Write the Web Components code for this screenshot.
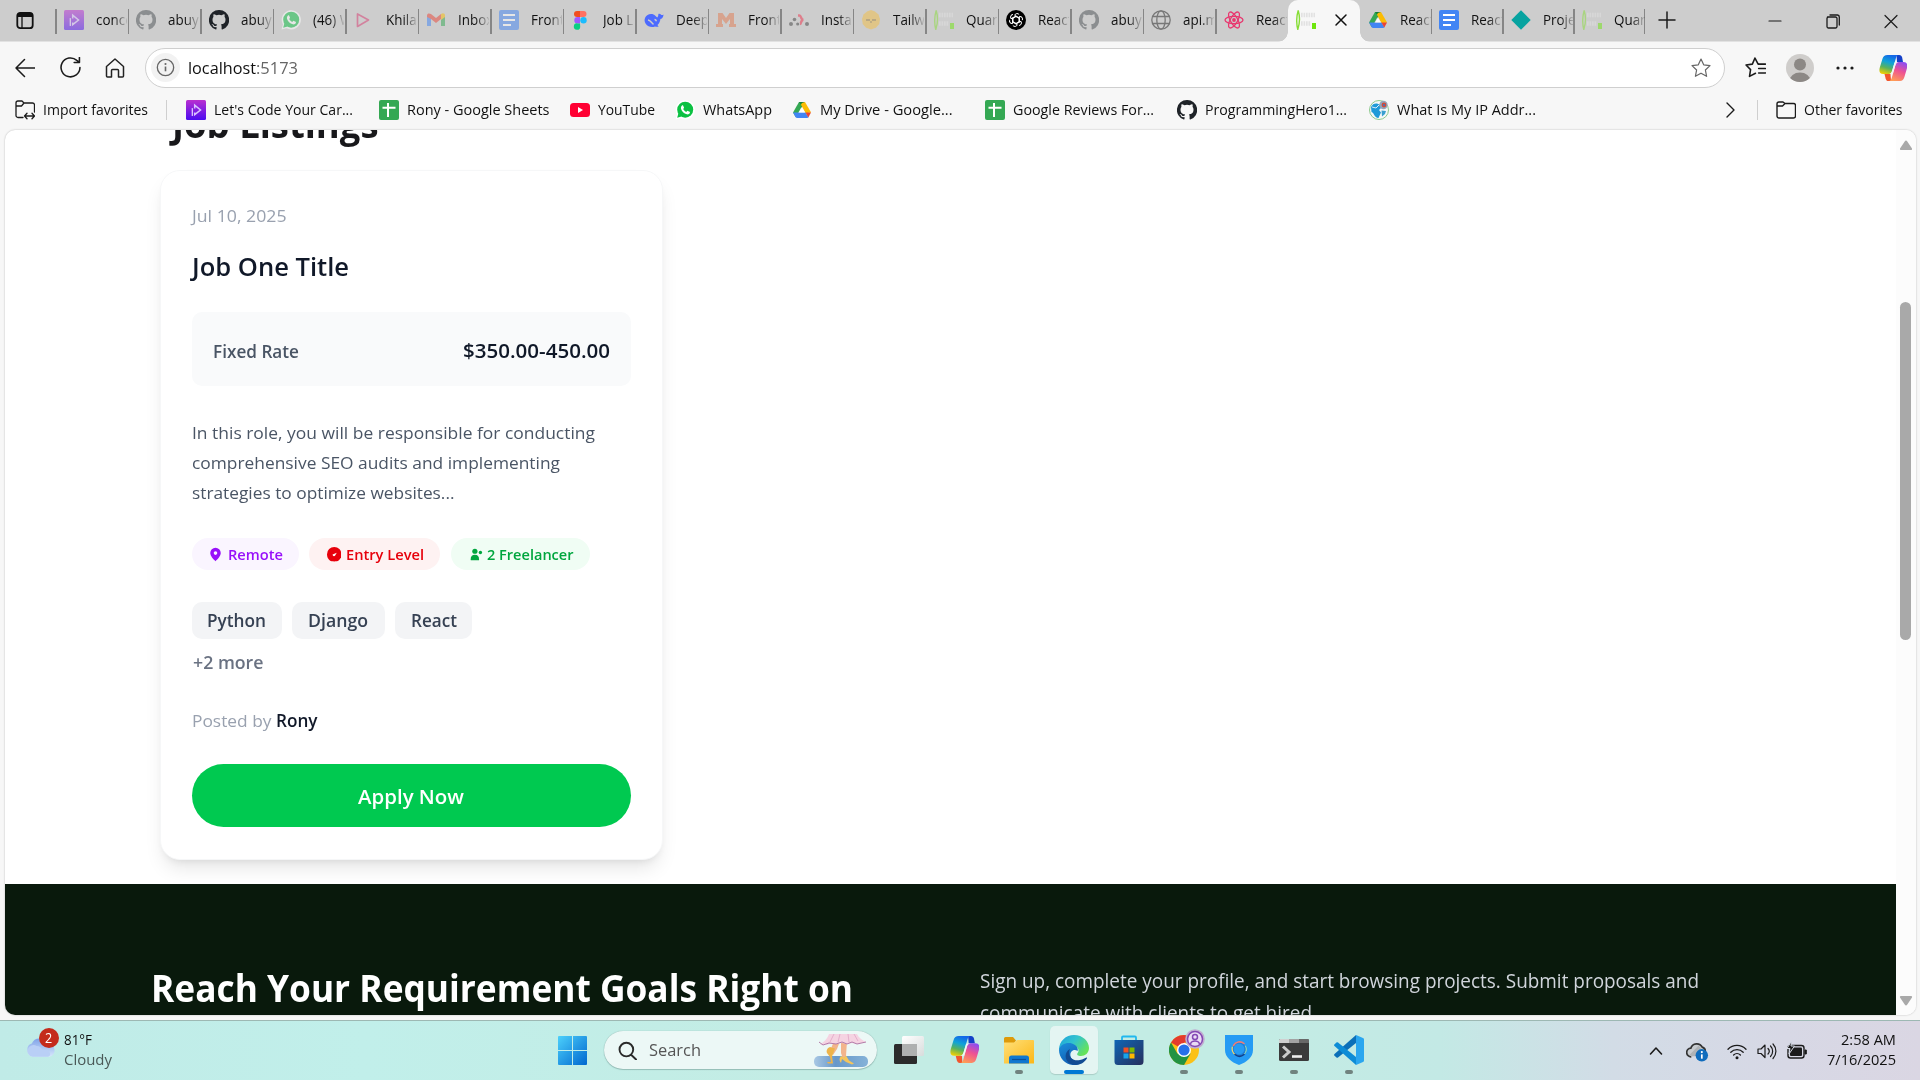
<!DOCTYPE html>
<html lang="en">
<head>
<meta charset="utf-8">
<title>Job Listings</title>
<style>
html,body{margin:0;height:100%;overflow:hidden;background:#f7f7f7}
body{font-family:"Open Sans","Noto Sans",sans-serif;color:#111}
</style>
</head>
<body>
<desktop-screen></desktop-screen>
<script>
const define = (name, css, html, after) => customElements.define(name, class extends HTMLElement {
  connectedCallback() {
    if (this.shadowRoot) return;
    const root = this.attachShadow({mode: 'open'});
    root.innerHTML = '<style>*{box-sizing:border-box}' + css + '</style>' + (typeof html === 'function' ? html(this) : html);
    if (after) after(this, root);
  }
});

/* Icon set: [viewBox, markup] */
const GITHUB = c => `<path fill="${c}" fill-rule="evenodd" d="M10 0a10 10 0 0 0-3.2 19.5c.5.1.7-.2.7-.5v-1.9c-2.8.6-3.4-1.2-3.4-1.2-.4-1.1-1.1-1.4-1.1-1.4-.9-.6.1-.6.1-.6 1 .1 1.5 1 1.5 1 .9 1.6 2.4 1.1 2.9.9.1-.7.4-1.1.6-1.3-2.2-.3-4.6-1.1-4.6-5 0-1.1.4-2 1-2.7-.1-.2-.4-1.3.1-2.6 0 0 .9-.3 2.8 1a9.600 9.600 0 0 1 5.200 0c1.900-1.300 2.800-1 2.800-1 .5 1.300.2 2.400.1 2.600.7.7 1 1.600 1 2.700 0 3.900-2.400 4.700-4.600 5 .4.3.7.9.7 1.800V19c0 .3.2.6.7.5A10 10 0 0 0 10 0"/>`;
const PH = `<defs><linearGradient id="p" x2="0" y2="1"><stop stop-color="#b92fd0"/><stop offset="1" stop-color="#4c0cf0"/></linearGradient></defs><rect width="20" height="20" rx="1.500" fill="url(#p)"/><path d="M6.300 8.500v7" stroke="#e9d9ff" stroke-width="1.200" stroke-linecap="round"/><path d="M8.700 8.500V5.200L14.500 10l-5.800 4.600v-2.200" fill="none" stroke="#d9c2ff" stroke-width="1.500"/>`;
const WA = `<path d="M.5 19.500l1.400-5A9.600 9.600 0 1 1 5.600 18.200z" fill="#fff"/><circle cx="10.200" cy="9.700" r="8" fill="#0cc143"/><path d="M2.200 17.800l1.200-4.500 3.200 3.200z" fill="#0cc143"/><path d="M7 5.500c.5-.3 1-.2 1.200.2l.8 1.800c.1.300-.1.700-.8 1.500.8 1.500 1.700 2.300 3.200 2.900.8-1 1.100-1.200 1.400-1l1.900.9c.3.200.3.500.2.900-.4 1.400-1.800 1.900-3 1.600C8.900 13.600 6.600 11.300 6 8.700c-.2-1.200 0-2.500 1-3.200" fill="#fff"/>`;
const DOCS = `<rect width="20" height="20" rx="2" fill="#4285f4"/><path d="M4 5h12M4 10h12M4 15h8" stroke="#fff" stroke-width="2"/>`;
const DRIVE = `<path fill="#188038" d="M7 2h6L10 7.200 7.200 8z"/><path fill="#34a853" d="M7 2L1 12.600 3.700 17.300l4.300-7.500L10 6z"/><path fill="#fbbc04" d="M13 2l6.100 10.600-5.400.6L8.900 4.800 10 3z"/><path fill="#4285f4" d="M1 12.600h12.500l3 4.700c-.4.500-.8.700-1.500.7H5c-.6 0-1-.2-1.300-.7z"/><path fill="#ea4335" d="M13.500 12.600H19l-2.700 4.800z"/><path d="M7 12.600l3-5 3 5z" fill="#fff" opacity=".9"/>`;
const QUAL = `<path d="M2.200.5Q5 10 1.800 19.500-.6 10 2.200.5" fill="none" stroke="#86dd35" stroke-width="1.400"/><g stroke="#e2e2e2" stroke-width="4.500" stroke-dasharray="1.700 .8"><path d="M5 5h14"/><path d="M5 13.500h10"/></g><rect x="16" y="13" width="4" height="6" fill="#6ee60d"/>`;
const SHEET = `<rect width="20" height="20" rx="2" fill="#34a853"/><path d="M9 3v14M3.500 7.700h13" stroke="#fff" stroke-width="2"/>`;
const COPILOT = `<defs><linearGradient id="a" x1=".5" x2=".2" y2="1"><stop stop-color="#1468e8"/><stop offset=".35" stop-color="#0fa3d8"/><stop offset=".65" stop-color="#57b25e"/><stop offset="1" stop-color="#f6d000"/></linearGradient><linearGradient id="b" x1=".7" x2=".3" y2="1"><stop stop-color="#8e4df0"/><stop offset=".45" stop-color="#ee5293"/><stop offset="1" stop-color="#ff9d55"/></linearGradient></defs>
<path d="M17.500 1h2.700c1.700 0 2.500 1 3 2.700L24 8h-6z" fill="#1440c8"/><path d="M12 27H9.500c-1.700 0-2.400-1-2.900-2.600L5.500 20h6z" fill="#f2562e"/>
<path d="M8.500 1h11.300c-1.600 0-2.300 1.200-2.900 3.200l-3.800 12.700c-.5 2-1.500 3.100-3.300 3.100H4.200C.5 20-.2 17.500.8 13.500L3.400 5C4.200 2.400 5.700 1 8.500 1" fill="url(#a)"/><path d="M21 27H9.800c1.700 0 2.400-1.200 3-3.200l3.600-12.600c.6-2.200 1.600-3.200 3.400-3.200h4.700c3.600 0 4.400 2.600 3.400 6.500L25.400 23c-.8 2.600-2 4-4.400 4" fill="url(#b)"/><path d="M15.500 8.500h4c-1.800 0-2.700 1.200-3.200 3l-2.600 8.500h-4c1.800 0 2.700-1 3.300-3z" fill="#eef7f6"/>`;
const st = (d, w = 1.4, c = '#1b1b1b', x = '') => `<path d="${d}" fill="none" stroke="${c}" stroke-width="${w}" stroke-linecap="round" stroke-linejoin="round" ${x}/>`;
const STAR = 'M10 1l2.700 5.800 6.300.8-4.600 4.400 1.200 6.300L10 15.200l-5.600 3.100 1.200-6.300L1 7.600l6.300-.8z';
const B = '0 0 20 20';
const PETAL = 'M8.700 5.300L13 7.700v4.800M8.700 5.300a2.500 2.500 0 0 1 4.500-.6';
const ICONS = {
  ph: [B, PH], github: [B, GITHUB('#1f2328')], githubGrey: [B, GITHUB('#4c5054')], whatsapp: [B, WA],
  play: [B, st('M3.500 4v12.500L14.500 10z', 1.700, '#d83a70')],
  gmail: [B, `<path fill="#4285f4" d="M1 16V5l4 3v8z"/><path fill="#34a853" d="M15 16V8l4-3v11z"/><path fill="#ea4335" d="M1 5.500C1 3 3.500 3 5 4l5 4 5-4v5l-5 4-5-4-4-2z"/><path fill="#fbbc04" d="M15 4c2-1.500 4-.5 4 1.500V7l-4 3z"/>`],
  docs: [B, DOCS], drive: [B, DRIVE], qual: [B, QUAL], sheet: [B, SHEET],
  figma: [B, `<rect x="3" y="1" width="7" height="6" rx="3" fill="#f24e1e"/><path d="M7 1h3v6H7z" fill="#f24e1e"/><path d="M9 1h3.500a3 3 0 0 1 0 6H9z" fill="#ff7262"/><path d="M9 7H6.500a3.200 3.200 0 0 0 0 6.400H9z" fill="#a259ff"/><circle cx="12.500" cy="10.200" r="3.200" fill="#1abcfe"/><path d="M9 13.400H6.500a3.200 3.200 0 1 0 2.700 3z" fill="#0acf83"/>`],
  deep: [B, `<path d="M19.500 4.500c-1 .7-1.900.7-2.600 0-.6-.6-1.600-1-2.500-.6 0 2-.6 3-1.200 3.500C11.500 6 11 5.200 9.500 4.500 7.500 3.700 5 4 3.200 5.200.3 7.200-.2 11.300 1.700 13.800c2.200 3.200 6.200 4 9.300 2.700 1.200.3 2.700.4 3.700-.1-.6-.4-1-.8-1.200-1.400 1.800-1.500 2.600-3.700 2.900-6 2.400-.5 3-2.400 3.100-4.500" fill="#4d6bfe"/><path d="M4 10c2.500.3 3.300 2.800 5.500 4.300M10.500 9.500c1 0 1.700.8 1.700 1.800" stroke="#cdcdcd" stroke-width="1.500" fill="none"/>`],
  mm: [B, `<path d="M2 3h4.500L10 8l3.500-5H18v11h2v3h-7v-3h1V9l-4 5-4-5v5h1v3H0v-3h2z" fill="#e27a50"/>`],
  router: [B, `<g fill="#444"><circle cx="2" cy="14" r="2"/><circle cx="5.500" cy="9.500" r="1.800"/><circle cx="8.700" cy="14" r="1.600"/><circle cx="18" cy="14" r="2"/></g><path d="M9 5.500h1.500c2 0 1 4.200 4 4.200-3 0-2 4.300-3.500 4.300" fill="none" stroke="#f0324c" stroke-width="2.400"/>`],
  daisy: [B, `<path d="M10 0l4 1.500 3.500 3L19 9l-.7 5-3.300 3.700L10 19.500l-5-1.800L1.700 14 1 9l1.500-4.500L6 1.500z" fill="#f4bf43"/><path d="M6 9v2M8 9v2M12 9v2M14 9v2M9.200 12h1.600" stroke="#5b4a34" stroke-width="1"/>`],
  openai: [B, `<circle cx="10" cy="10" r="10" fill="#000"/><g fill="none" stroke="#fff" stroke-width="1">${[0, 60, 120, 180, 240, 300].map(a => `<path d="${PETAL}" transform="rotate(${a} 10 10)"/>`).join('')}</g>`],
  globe: [B, `<g fill="none" stroke="#777" stroke-width="1.300"><circle cx="10" cy="10" r="9.200"/><ellipse cx="10" cy="10" rx="4.200" ry="9.200"/><path d="M1.500 6.500h17M1.500 13.500h17"/></g>`],
  react: [B, `<g fill="none" stroke="#e8386f" stroke-width="1.300"><ellipse cx="10" cy="10" rx="9" ry="3.600"/><ellipse cx="10" cy="10" rx="9" ry="3.600" transform="rotate(60 10 10)"/><ellipse cx="10" cy="10" rx="9" ry="3.600" transform="rotate(120 10 10)"/></g><circle cx="10" cy="10" r="1.900" fill="#e8386f"/>`],
  diamond: [B, `<path d="M10 .3L19.700 10 10 19.700.3 10z" fill="#07a3a0"/>`],
  youtube: [B, `<rect y="3" width="20" height="14" rx="3.500" fill="#ff0033"/><path d="M8 7v6l5-3z" fill="#fff"/>`],
  ip: [B, `<circle cx="10" cy="10" r="9.500" fill="#f5f8f8" stroke="#8cc98c"/><path d="M2 7C4 3 8 2.500 11 5l1 3-2 2 2 2.500L9.500 18C5 17.500 5.500 13 2.500 12z" fill="#1e9ad8"/><path d="M3 7l4 1 3-3" stroke="#d8eefa" fill="none"/><path d="M12.500 10.500l4.500.5-1 3-3 2.500z" fill="#3a9fd0"/><circle cx="14.500" cy="5" r="4.200" fill="#93a5b8"/><circle cx="15" cy="5" r="2.400" fill="#d44a37"/><circle cx="15" cy="5" r="1.100" fill="#3a78c0"/>`],
  sidebar: [B, `<rect x="2.300" y="2.800" width="15.400" height="15.400" rx="3" fill="none" stroke="#111" stroke-width="1.800"/><path d="M2.300 7V5.300a2.500 2.500 0 0 1 2.500-2.500h10.400a2.500 2.500 0 0 1 2.500 2.500V7z" fill="#111"/><path d="M7 7v11" stroke="#111" stroke-width="1.300"/>`],
  x: [B, st('M5 5l10 10M15 5L5 15', 1.500, '#111')],
  plus: [B, st('M10 2v16M2 10h16', 1.500)], min: [B, st('M4 10h12', 1.200)],
  restore: [B, st('M4.500 6h8a1.500 1.500 0 0 1 1.500 1.500v8a1.500 1.500 0 0 1-1.500 1.500h-7A1.500 1.500 0 0 1 4 15.500v-8A1.500 1.500 0 0 1 5.500 6M7 4h7.500A2 2 0 0 1 16.300 6v8', 1.300)],
  close: [B, st('M4 4.500l12 12M16 4.500l-12 12', 1.200)],
  back: [B, st('M20 10H1M9.500 1.500L1 10l8.500 8.500', 1.500)],
  reload: [B, st('M19 10a9 9 0 1 1-3-6.800L18.300 5M18.500.500V5.300h-5', 1.500)],
  home: [B, st('M1.500 8.500L10 1l8.500 7.500V18a1 1 0 0 1-1 1h-4v-6.500a1 1 0 0 0-1-1h-5a1 1 0 0 0-1 1V19h-4a1 1 0 0 1-1-1z', 1.500, '#222')],
  info: [B, `<circle cx="10" cy="10" r="8.600" fill="none" stroke="#666" stroke-width="1.400"/><path d="M10 9v5" stroke="#666" stroke-width="1.700"/><circle cx="10" cy="6.300" r="1.100" fill="#666"/>`],
  star: [B, st(STAR, 1.200, '#666')],
  favs: [B, st('M12.500 6.800L9.500 1 7 6.800 1 7.600 5.300 12 4.300 18.500 10 15.500M13 6.800h6.500M13 11h6.500M13 15.200h6.500', 1.500)],
  avatar: ['0 0 28 28', `<defs><clipPath id="c"><circle cx="14" cy="14" r="14"/></clipPath></defs><circle cx="14" cy="14" r="14" fill="#cfcdcb"/><g clip-path="url(#c)" fill="#8c8885"><circle cx="14" cy="10.500" r="6"/><ellipse cx="14" cy="27" rx="10.500" ry="8.500"/></g>`],
  dots: [B, `<g fill="#1b1b1b"><circle cx="3" cy="10" r="1.600"/><circle cx="10" cy="10" r="1.600"/><circle cx="17" cy="10" r="1.600"/></g>`],
  copilot: ['0 0 28 28', COPILOT],
  importf: ['0 0 20 20', st('M8 17.500H3A2 2 0 0 1 1 15.500V3a2 2 0 0 1 2-2h4l2 2h8.500A2 2 0 0 1 19.500 5v7M1 6h5.500L9 3M9.500 16h10M12 13.300L9.500 16l2.500 2.700M17 13.300l2.500 2.700L17 18.700', 1.300)],
  folder: ['0 0 20 20', st('M1 6V4a2 2 0 0 1 2-2h4l2 1.500h8.500a2 2 0 0 1 2 2V16a2 2 0 0 1-2 2H3a2 2 0 0 1-2-2V6h5.500L9 3.500', 1.400)],
  chev: [B, st('M7 3l7 7-7 7', 1.400)],
  up: [B, st('M4.500 13l5.500-6 5.500 6', 1.600)],
  pin: [B, `<path fill="#9810fa" fill-rule="evenodd" d="M10 1a7 7 0 0 0-7 7c0 4 4 8 7 11 3-3 7-7 7-11a7 7 0 0 0-7-7m0 4.700a2.400 2.400 0 1 1 0 4.800 2.400 2.400 0 0 1 0-4.800"/>`],
  gauge: [B, `<path d="M10 0a10 10 0 0 1 10 10c0 4-1.500 6.500-4 8.700-2 1.700-10 1.700-12 0C1.500 16.500 0 14 0 10A10 10 0 0 1 10 0" fill="#e7000b"/><path d="M13.500 8L11 12a1.900 1.900 0 0 1-3.300-1.500z" fill="#fff"/>`],
  users: [B, `<g fill="#00a63e"><circle cx="7.500" cy="5" r="4"/><circle cx="16" cy="7" r="2.600"/><path d="M1 18c0-5 2-7.500 6.500-7.500S14 13 14 18c0 1-.5 1-1.500 1h-10C1.500 19 1 19 1 18"/></g>`],
  weather: ['0 0 32 22', `<defs><linearGradient id="w" x2="0" y2="1"><stop stop-color="#7fa2e8"/><stop offset="1" stop-color="#d6e6fb"/></linearGradient></defs><path d="M8 21a7 7 0 0 1-1-13.500A8.500 8.500 0 0 1 23 8a6.500 6.500 0 0 1 2 13z" fill="url(#w)"/><path d="M8 21a6 6 0 1 1 4-11c3 0 5 2 6 4 8-1 10 6 6 7z" fill="#b9cff6"/>`],
  win: ['0 0 29 29', `<defs><linearGradient id="g" x2="29" y2="29" gradientUnits="userSpaceOnUse"><stop stop-color="#4cd0fb"/><stop offset="1" stop-color="#0067cf"/></linearGradient></defs><path fill="url(#g)" d="M1 0h13v14H0V1a1 1 0 0 1 1-1M15 0h13a1 1 0 0 1 1 1v13H15zM0 15h14v14H1a1 1 0 0 1-1-1zM15 15h14v13a1 1 0 0 1-1 1H15z"/>`],
  search: [B, st('M16 9A7.200 7.200 0 1 1 1.600 9 7.200 7.200 0 0 1 16 9M13.800 14.500L19 19.500', 2, '#2a2a2a')],
  dress: ['0 0 54 33', `<defs><linearGradient id="l" x2="1"><stop stop-color="#a9c8e4"/><stop offset=".4" stop-color="#6798ca"/><stop offset="1" stop-color="#85b2d8"/></linearGradient></defs><rect y="22" width="54" height="11" rx="5" fill="url(#l)"/><path d="M20 7h6l-3 8-4 6-3-4zM27 7h6l-1 15-3 3-2-6z" fill="#f2b48c"/><path d="M16 13c-3 1-4 4-3 6l3 4 1 5-4 0 1 1.500h5l-1-7 3-8z" fill="#eeb44a"/><path d="M27 22c-2 2-2 5 0 7l1-4 4 3 6 2.500 2-1-5-3-3-5-2 2z" fill="#f4c45c"/><path d="M15 0h28c2 4 5 6 9 8l-5 1-4 1-5-1-5 1-5-1-6 1-5-1-4 2-2-1-5 1C9 8 13 6 15 0" fill="#f5d3e2"/><path d="M20 0l-4 8M26 0l-2 8M34 0l1 8M40 0l4 7" stroke="#e4aecb" fill="none"/><path d="M5 8l4 3 6-2 7 1 6-2 5 2 5-2 5 2 9-2" stroke="#b37ba8" fill="none"/>`],
  task: ['0 0 30 28', `<defs><linearGradient id="t" x2="1" y2="1"><stop stop-color="#fff"/><stop offset="1" stop-color="#d8dcdc"/></linearGradient></defs><rect y="8" width="23" height="20" rx="1.500" fill="#2b2b2b"/><rect x="8" width="22" height="20" rx="1.500" fill="url(#t)"/><path d="M8 8h15v12H8z" fill="#aeb0b0"/>`],
  explorer: ['0 0 30 30', `<defs><linearGradient id="f" x2="1" y2="1"><stop stop-color="#ffe07a"/><stop offset="1" stop-color="#fcb716"/></linearGradient></defs><path d="M0 3.500A1.500 1.500 0 0 1 1.500 2H9l3 3.500-2 3H0z" fill="#dd9a0b"/><path d="M0 7.500h10l3-2.500h16a1 1 0 0 1 1 1v22.500H0z" fill="url(#f)"/><path d="M5 28.500V23a2.500 2.500 0 0 1 2.500-2.500h15A2.500 2.500 0 0 1 25 23v5.500z" fill="#1078d0"/><path d="M8 24.500h14" stroke="#0a4e98" stroke-width="1.200"/>`],
  edge: ['0 0 30 30', `<defs><linearGradient id="e1" x2="1" y2=".6"><stop stop-color="#1ba0dd"/><stop offset=".5" stop-color="#32c3ce"/><stop offset="1" stop-color="#66e35a"/></linearGradient><linearGradient id="e2" x2=".4" y2="1"><stop stop-color="#1c8fdb"/><stop offset="1" stop-color="#1160b5"/></linearGradient></defs><path d="M0 15C0 6 7 0 15 0c9 0 15 6.500 15 13 0 5-4 8-8 8-3 0-5-1-3-3.500 1.500-2 0-6.500-5-7.500-5-.5-11 1-14 5" fill="url(#e1)"/><path d="M0 15C1 9 8 7 13 8.500c5 1.500 6.500 5 5.500 7.500-2.500-2.500-8-.5-7 5 1 4 5 7 9 8C10 33 0 25 0 15" fill="url(#e2)"/><path d="M11 14c-3 6 2 13 10 11 3-.5 5-2 6.500-2.500.5 0 .7.3.5.7C24 30 17 31 12 29 5 26 5 17 11 14" fill="#124b92"/>`],
  store: ['0 0 30 30', `<defs><linearGradient id="s" x2="1" y2="1"><stop stop-color="#0f66b5"/><stop offset="1" stop-color="#272f5c"/></linearGradient></defs><path d="M8 6V2.500A1 1 0 0 1 9 1.500h12a1 1 0 0 1 1 1V6" fill="none" stroke="#20b8ee" stroke-width="1.800"/><path d="M.5 5h29v21.500A3.500 3.500 0 0 1 26 30H4a3.500 3.500 0 0 1-3.500-3.500z" fill="url(#s)"/><path d="M9.500 12.500h5v5h-5z" fill="#f25022"/><path d="M15.500 12.500h5v5h-5z" fill="#7fba00"/><path d="M9.500 18.500h5v5h-5z" fill="#18a4ea"/><path d="M15.500 18.500h5v5h-5z" fill="#ffb900"/>`],
  chrome: ['0 0 36 36', `<g transform="translate(0 6)"><circle cx="15" cy="15" r="15" fill="#fbc116"/><path d="M15 15L2 7.500A15 15 0 0 1 28 7.500H15z" fill="#e33b2e"/><path d="M2 7.500A15 15 0 0 0 15 30l6.500-11.300L15 15l-6.500 3.700z" fill="#229342"/><circle cx="15" cy="15" r="7" fill="#fff"/><circle cx="15" cy="15" r="5.600" fill="#2870ea"/></g><circle cx="26" cy="10" r="9.800" fill="#c0aed0"/><circle cx="26" cy="10" r="7.500" fill="#eadcf5" stroke="#8448b4" stroke-width="1.500"/><circle cx="26" cy="8" r="2.500" fill="none" stroke="#8448b4" stroke-width="1.500"/><path d="M21.500 15c1-4 8-4 9 0" fill="none" stroke="#8448b4" stroke-width="1.500"/>`],
  shield: ['0 0 30 30', `<path d="M1 0h28v15c0 7-6 12-14 15C7 27 1 22 1 15z" fill="#259bf4"/><g fill="none" stroke-width="1.600" stroke-linecap="round"><circle cx="15" cy="14" r="6.200" stroke="#1f7fd8"/><path d="M9.500 10.500a7 7 0 0 1 10.500-2" stroke="#f07d77"/><path d="M21.500 11a7 7 0 0 1-1 8" stroke="#a7dfa2" stroke-width="1"/><path d="M8.300 12a7.500 7.500 0 0 0 2.700 7.500" stroke="#f5dc69" stroke-width="1.200"/><path d="M11 19.500a7.200 7.200 0 0 0 9 0" stroke="#123f88"/></g>`],
  terminal: ['0 0 30 30', `<rect y="4" width="30" height="22" rx="1.500" fill="#3b3b3b"/><path d="M1 4h9v4H0V5z" fill="#d0d0d0"/><path d="M10 4h10v4H10z" fill="#a2a2a2"/><path d="M20 4h9l1 1v3H20z" fill="#686868"/><path d="M4 11.500l6 5.500-6 5.500" fill="none" stroke="#ccc" stroke-width="3"/><path d="M13 21.500h10" stroke="#eee" stroke-width="2.600"/>`],
  vscode: ['0 0 30 30', `<path d="M22 0v8L4 22.500c-.6.400-1 .4-1.500 0L.5 20.700c-.6-.6-.6-1.200 0-1.800z" fill="#0b6fb8"/><path d="M22 30v-8L4 7.500c-.6-.4-1-.4-1.500 0L.5 9.300c-.6.600-.6 1.200 0 1.800z" fill="#0d8cd6"/><path d="M22 0l7 3c.7.300 1 .8 1 1.500v21c0 .7-.3 1.200-1 1.500l-7 3z" fill="#2aa6ef"/>`],
  cloudinfo: ['0 0 24 24', `<path d="M5.500 17.500A4.500 4.500 0 0 1 5 8.500a6.500 6.500 0 0 1 12-1 4.500 4.500 0 0 1 3 5" fill="#c8ccd0" stroke="#333" stroke-width="1.800"/><path d="M4 15l9-9 4 4-7 7H6z" fill="#aeb2b6"/><circle cx="16.500" cy="16" r="6.500" fill="#0f6cbd"/><path d="M16.500 15v4.500" stroke="#fff" stroke-width="1.800"/><circle cx="16.500" cy="12.600" r="1.100" fill="#fff"/>`],
  wifi: [B, st('M1 8.300a12.500 12.500 0 0 1 18 0M3.800 11.300a8.700 8.700 0 0 1 12.400 0M6.600 14a5 5 0 0 1 6.800 0', 1.300) + '<circle cx="10" cy="16.800" r="1.500" fill="#1b1b1b"/>'],
  speaker: [B, st('M1 8v4.500h3l4 4V4L4 8zM11 7.500a4 4 0 0 1 0 5.500M13.500 5a7.500 7.500 0 0 1 0 10.500M16 3a10.500 10.500 0 0 1 0 14.500', 1.200)],
  battery: ['0 0 22 20', `<rect x="2" y="4.500" width="16" height="12.500" rx="2.500" fill="none" stroke="#1b1b1b" stroke-width="1.400"/><rect x="4" y="6.500" width="12" height="8.500" rx="1" fill="#1b1b1b"/><path d="M19 9v4h1.300V9z" fill="#1b1b1b" stroke="#1b1b1b"/><path d="M5.500 0L1 7.500h3l-1 5.500 5.500-8H5z" fill="#1b1b1b" stroke="#d5dae5" stroke-width="1"/>`],
  tri: [B, `<path d="M8.700 6.500Q10 4.500 11.300 6.500L16 13.500Q16.500 15 15 15H5Q3.500 15 4 13.500z" fill="#a9a9a9"/>`]
};

define('ui-icon', ':host{display:block;flex:none}svg{display:block;width:100%;height:100%}', el => {
  const s = el.getAttribute('s') || 20, [vb, m] = ICONS[el.getAttribute('n')];
  el.style.width = (el.getAttribute('w') || s) + 'px'; el.style.height = (el.getAttribute('h') || s) + 'px';
  return `<svg viewBox="${vb}">${m}</svg>`;
});

/* Single text line: s = font size, w = set width, k = horizontal scale */
const lines = [];
define('ui-text', ':host{display:block;flex:none;white-space:nowrap}span{display:inline-block;transform-origin:0 50%;white-space:pre}', '<span><slot></slot></span>', (el, root) => {
  el.style.fontSize = el.getAttribute('s') + 'px';
  el.style.lineHeight = (el.getAttribute('lh') || 20) + 'px';
  lines.push(() => {
    const span = root.querySelector('span'), n = span.getBoundingClientRect().width;
    const w = +el.getAttribute('w') || n * (+el.getAttribute('k') || 1);
    el.style.width = w + 'px'; el.style.height = el.style.lineHeight;
    span.style.transform = `scaleX(${w / n})`;
  });
});

define('browser-tab', `:host{display:flex;flex:none;align-items:center;position:relative;width:72.500px;height:42px;padding:0 0 2px 8px}
:host([short]){width:71.200px}
:host([faded]) ui-icon{opacity:.5}
i{position:absolute;left:-.5px;top:9px;width:1.500px;height:25px;background:#868686}
:host([nosep]) i{display:none}
div{margin-left:12px;width:31px;overflow:hidden;-webkit-mask:linear-gradient(90deg,#000 55%,transparent 105%);mask:linear-gradient(90deg,#000 55%,transparent 105%)}`,
  el => `<i></i><ui-icon n="${el.getAttribute('icon')}"></ui-icon><div><ui-text s="14.500" k=".925" lh="22"><slot></slot></ui-text></div>`);

define('active-tab', `:host{display:flex;flex:none;align-items:center;width:72px;height:43px;background:#f7f7f7;border-radius:10px 10px 0 0;padding:0 0 3px 8px;position:relative;gap:14.500px}
:host::before,:host::after{content:"";position:absolute;bottom:1px;width:10px;height:10px}
:host::before{left:-10px;background:radial-gradient(circle at 0 0,transparent 9.500px,#f7f7f7 10px)}
:host::after{right:-10px;background:radial-gradient(circle at 100% 0,transparent 9.500px,#f7f7f7 10px)}`,
  '<ui-icon n="qual"></ui-icon><ui-icon n="x"></ui-icon>');

const tabs = list => list.map(([i, t, a = '']) => `<browser-tab icon="${i}" ${a}>${t}</browser-tab>`).join('');
define('tab-strip', `:host{display:flex;height:42px;background:#cdcdcd;align-items:flex-start;border-bottom:1px solid #e2e2e2}
.side{margin:10px 20.700px 0 15px}.plus{margin:10px 0 0 12px}.win{display:flex;margin:11px 19px 0 auto;gap:38px}active-tab{z-index:1}`,
  `<ui-icon class="side" n="sidebar"></ui-icon>${tabs([
    ['ph','conce','faded'],['githubGrey','abuyu','faded'],['github','abuyu'],['whatsapp','(46) W','faded'],['play','Khilar','faded'],['gmail','Inbox','faded'],['docs','Front','faded'],['figma','Job Li'],['deep','Deep'],['mm','Front','faded'],['router','Instal','faded'],['daisy','Tailwi','faded'],['qual','Quan','faded'],['openai','React'],['githubGrey','abuyu','faded'],['globe','api.m'],['react','React']])}<active-tab></active-tab>${tabs([
    ['drive','React','short nosep'],['docs','React','short'],['diamond','Projec','short'],['qual','Quan','short faded']])}
<browser-end></browser-end><ui-icon class="plus" n="plus"></ui-icon>
<div class="win"><ui-icon n="min"></ui-icon><ui-icon n="restore"></ui-icon><ui-icon n="close"></ui-icon></div>`);
define('browser-end', ':host{display:block;width:1.500px;height:25px;margin-top:9px;margin-left:-1px;background:#868686}', '');

define('tool-bar', `:host{display:flex;height:53px;align-items:center;padding:0 13px 1.500px 15px;background:#f7f7f7}
.pill{display:flex;align-items:center;width:1580px;height:40px;margin-left:20px;border:1.500px solid #cfcfcf;border-radius:20px;background:#fff;padding:0 13px 0 4.500px}
.info{display:flex;width:29px;height:29px;border-radius:50%;background:#f2f2f2;align-items:center;justify-content:center;margin-right:8px}
.pill ui-icon[n=star]{margin-left:auto}.port{color:#666}`,
  `<ui-icon n="back"></ui-icon><ui-icon n="reload" style="margin-left:25px" s="21"></ui-icon><ui-icon n="home" style="margin-left:24px"></ui-icon>
<div class="pill"><div class="info"><ui-icon n="info" s="19"></ui-icon></div><ui-text s="17" w="68" lh="24">localhost</ui-text><ui-text class="port" s="17" w="42" lh="24">:5173</ui-text><ui-icon n="star"></ui-icon></div>
<ui-icon n="favs" s="21" style="margin-left:19.500px"></ui-icon><ui-icon n="avatar" s="28" style="margin-left:20px"></ui-icon><ui-icon n="dots" style="margin-left:21px"></ui-icon><ui-icon n="copilot" s="28" style="margin-left:24px"></ui-icon>`);

define('book-mark', ':host{display:flex;flex:none;align-items:center;gap:8px}', el => {
  el.style.marginLeft = (el.getAttribute('ml') || 0) + 'px';
  return `<ui-icon n="${el.getAttribute('icon')}"></ui-icon><ui-text s="14.500" w="${el.getAttribute('w')}" lh="20"><slot></slot></ui-text>`;
});
define('bookmarks-bar', ':host{display:flex;height:34px;align-items:center;padding:0 18px 3.500px 15px;background:#f7f7f7}i{width:1px;height:20px;background:#cfcfcf;margin-left:18px}.end{margin-left:auto}',
  `<book-mark icon="importf" w="105">Import favorites</book-mark><i></i>
<book-mark icon="ph" ml="19" w="139">Let's Code Your Car...</book-mark><book-mark icon="sheet" ml="26" w="142.500">Rony - Google Sheets</book-mark><book-mark icon="youtube" ml="20.500" w="57">YouTube</book-mark><book-mark icon="whatsapp" ml="19.500" w="69">WhatsApp</book-mark><book-mark icon="drive" ml="20.500" w="132.500">My Drive - Google...</book-mark><book-mark icon="sheet" ml="32" w="141">Google Reviews For...</book-mark><book-mark icon="github" ml="23" w="142">ProgrammingHero1...</book-mark><book-mark icon="ip" ml="22" w="139">What Is My IP Addr...</book-mark>
<ui-icon class="end" n="chev"></ui-icon><i style="margin:0 18px 0 17px"></i><book-mark icon="folder" w="98.500">Other favorites</book-mark>`);

define('job-badge', ':host{display:flex;align-items:center;height:31.500px;border-radius:16px;font-weight:600;padding-top:1px}', el => {
  const [w, pl, is, gap, tw] = el.getAttribute('dims').split(' ');
  el.style.width = w + 'px'; el.style.paddingLeft = pl + 'px';
  return `<ui-icon n="${el.getAttribute('icon')}" s="${is}" style="margin-right:${gap}px"></ui-icon><ui-text s="15" w="${tw}" lh="22"><slot></slot></ui-text>`;
});
define('skill-tag', ':host{display:flex;justify-content:center;height:37px;border-radius:10px;background:#f3f4f6;color:#364153;font-weight:600;padding-top:7.500px}', el => {
  el.style.width = el.getAttribute('w') + 'px';
  return `<ui-text s="17.200" w="${el.getAttribute('tw')}" lh="24"><slot></slot></ui-text>`;
});
define('job-card', `:host{display:flex;flex-direction:column;width:503px;height:690px;border:1px solid #f6f7f8;border-radius:20px;background:#fff;padding:33.500px 31px 0 31.200px;box-shadow:0 12px 19px -4px #0000001a,0 5px 8px -5px #0000001a}
.row{display:flex}.m{color:#99a1af}.d{color:#101828}.g{color:#4a5565}.sb{font-weight:600}
.rate{justify-content:space-between;height:74px;margin-top:29px;background:#f9fafb;border-radius:10px;padding:26.500px 21px 0}
.desc{margin-top:31.500px}.badges{margin-top:30.500px;gap:10.500px}.skills{margin-top:32px;gap:10.500px}
.apply{display:flex;justify-content:center;height:63px;margin-top:31px;border-radius:32px;background:#00c950;color:#fff;font-weight:600;padding-top:16px}`,
  `<ui-text class="m" s="17.200" w="94.500" lh="24">Jul 10, 2025</ui-text>
<ui-text class="d sb" s="24.500" w="157" lh="32" style="margin-top:23px">Job One Title</ui-text>
<div class="row rate"><ui-text class="g sb" s="17.200" w="86" lh="25.500">Fixed Rate</ui-text><ui-text class="d sb" s="20.300" w="147" lh="22">$350.00-450.00</ui-text></div>
<div class="desc g"><ui-text s="17.200" w="403" lh="30">In this role, you will be responsible for conducting</ui-text><ui-text s="17.200" w="368" lh="30">comprehensive SEO audits and implementing</ui-text><ui-text s="17.200" w="262.500" lh="30">strategies to optimize websites...</ui-text></div>
<div class="row badges"><job-badge icon="pin" dims="107 16 15 5.500 55" style="background:#faf5ff;color:#9810fa">Remote</job-badge><job-badge icon="gauge" dims="131 17.500 14.500 5 78" style="background:#fef2f2;color:#e7000b">Entry Level</job-badge><job-badge icon="users" dims="139 19 13 4.500 86.500" style="background:#f0fdf4;color:#00a63e">2 Freelancer</job-badge></div>
<div class="row skills"><skill-tag w="90" tw="59">Python</skill-tag><skill-tag w="92.500" tw="60">Django</skill-tag><skill-tag w="77" tw="46">React</skill-tag></div>
<ui-text class="sb" style="color:#6a7282;margin:12.500px 0 0 1px" s="17.200" w="70.500" lh="24">+2 more</ui-text>
<div class="row" style="margin-top:34px;gap:5px"><ui-text class="m" s="17.200" w="79.500" lh="24">Posted by</ui-text><ui-text class="d sb" s="17.200" w="41.500" lh="24">Rony</ui-text></div>
<div class="apply"><ui-text s="20.300" w="106" lh="32">Apply Now</ui-text></div>`);

define('promo-section', ':host{display:flex;height:140px;background:#09190c;color:#fff;margin-top:24px;padding-left:146px}h2{margin:82px 0 0;width:829.500px;font-weight:700}.p{color:#d1d5dc;padding-top:81px}',
  `<h2><ui-text s="37" w="702" lh="44">Reach Your Requirement Goals Right on</ui-text></h2><div class="p"><ui-text s="19.600" w="719" lh="32">Sign up, complete your profile, and start browsing projects. Submit proposals and</ui-text><ui-text s="19.600" w="337" lh="32">communicate with clients to get hired.</ui-text></div>`);

define('scroll-bar', ':host{display:flex;flex-direction:column;width:19.500px;align-items:center;background:#fcfcfc;padding:5px 0 4px}b{width:11px;height:338px;border-radius:6px;background:#a9a9a9;margin:147px 0 auto}.dn{transform:rotate(180deg)}',
  '<ui-icon n="tri"></ui-icon><b></b><ui-icon class="dn" n="tri"></ui-icon>');

define('web-page', `:host{display:flex;width:1911px;height:885px;margin-left:4.500px;border-radius:10px;overflow:hidden;background:#fff;box-shadow:0 0 2px #0004}
main{flex:1;overflow:hidden}h1{height:40px;margin:0 0 0 167.500px;display:flex;flex-direction:column;justify-content:flex-end;color:#18181b;font-weight:700}job-card{margin-left:155px}`,
  `<main><h1><ui-text s="37" w="206.500" lh="92">Job Listings</ui-text></h1><job-card></job-card><promo-section></promo-section></main><scroll-bar></scroll-bar>`);

define('task-app', `:host{display:flex;flex:none;flex-direction:column;align-items:center;width:48px;height:48px;padding-top:9px;margin-right:7px;border-radius:5px}
:host([active]){background:#e4f5f2;box-shadow:0 1px 1px #0002}ui-icon[n=chrome]{margin:-6px 0 0 6px}
b{width:8px;height:4px;border-radius:2px;background:#71837f;margin-top:5px}:host([active]) b{width:20px;background:#0078d4}`,
  el => `<ui-icon n="${el.getAttribute('icon')}" s="${{chrome: 36, copilot: 29}[el.getAttribute('icon')] || 30}"></ui-icon>${el.hasAttribute('open') ? '<b></b>' : ''}`);

define('task-bar', `:host{display:flex;height:60px;border-top:1px solid #9db8b3;background:linear-gradient(90deg,#c0ebe7 0,#c1efea 19%,#c3ece4 42%,#c3ece4 65%,#c3e9e5 75%,#d2dce6 84%,#d7d8e5 93%,#dad6e3 100%)}
.weather{display:flex;margin-left:25px;width:533px;gap:8px;position:relative}.weather ui-icon{margin-top:15px}.weather div{padding-top:8.500px}
.badge{position:absolute;left:14px;top:7px;width:20px;height:20px;border-radius:50%;background:#c42b1c;color:#fff;display:flex;justify-content:center}
.find{display:flex;align-items:center;width:273px;height:38px;margin:10px 17px 0;border-radius:19px;background:#ecf8f6;box-shadow:0 1px 1px #7aa39d99,0 0 1px #7aa39d;padding:0 9px 0 14px}
.find ui-text{margin-left:12px;color:#555}.find ui-icon[n=dress]{margin-left:auto}
.apps{display:flex;margin:5px 0 0 16px}.tray{display:flex;align-items:center;margin:0 24px 0 auto}.time{display:flex;flex-direction:column;align-items:flex-end;margin:0 0 2px 19px}`,
  `<div class="weather"><ui-icon n="weather" w="31" h="22"></ui-icon><span class="badge"><ui-text s="14" k=".9" lh="20">2</ui-text></span><div><ui-text s="14.500" w="28" lh="20">81°F</ui-text><ui-text s="14.500" w="48" lh="20" style="color:#4a5957">Cloudy</ui-text></div></div>
<ui-icon n="win" s="29" style="margin-top:15px"></ui-icon>
<div class="find"><ui-icon n="search" s="19"></ui-icon><ui-text s="17" w="52" lh="24">Search</ui-text><ui-icon n="dress" w="54" h="33"></ui-icon></div>
<ui-icon n="task" w="30" h="28" style="margin-top:15px"></ui-icon>
<div class="apps"><task-app icon="copilot"></task-app><task-app icon="explorer" open></task-app><task-app icon="edge" open active></task-app><task-app icon="store"></task-app><task-app icon="chrome" open></task-app><task-app icon="shield" open></task-app><task-app icon="terminal" open></task-app><task-app icon="vscode" open></task-app></div>
<div class="tray"><ui-icon n="up"></ui-icon><ui-icon n="cloudinfo" s="23" style="margin:2px 0 0 20px"></ui-icon><ui-icon n="wifi" style="margin-left:18px"></ui-icon><ui-icon n="speaker" style="margin-left:10px"></ui-icon><ui-icon n="battery" w="22" h="20" style="margin-left:9px"></ui-icon>
<div class="time"><ui-text s="14.500" w="55" lh="20">2:58 AM</ui-text><ui-text s="14.500" w="69" lh="20">7/16/2025</ui-text></div></div>`);

define('desktop-screen', ':host{display:flex;flex-direction:column;width:1920px;height:1080px;overflow:hidden;background:#f7f7f7}task-bar{margin-top:auto}web-page{margin-top:.5px}',
  '<tab-strip></tab-strip><tool-bar></tool-bar><bookmarks-bar></bookmarks-bar><web-page></web-page><task-bar></task-bar>');

lines.forEach(fit => fit());
</script>
</body>
</html>
